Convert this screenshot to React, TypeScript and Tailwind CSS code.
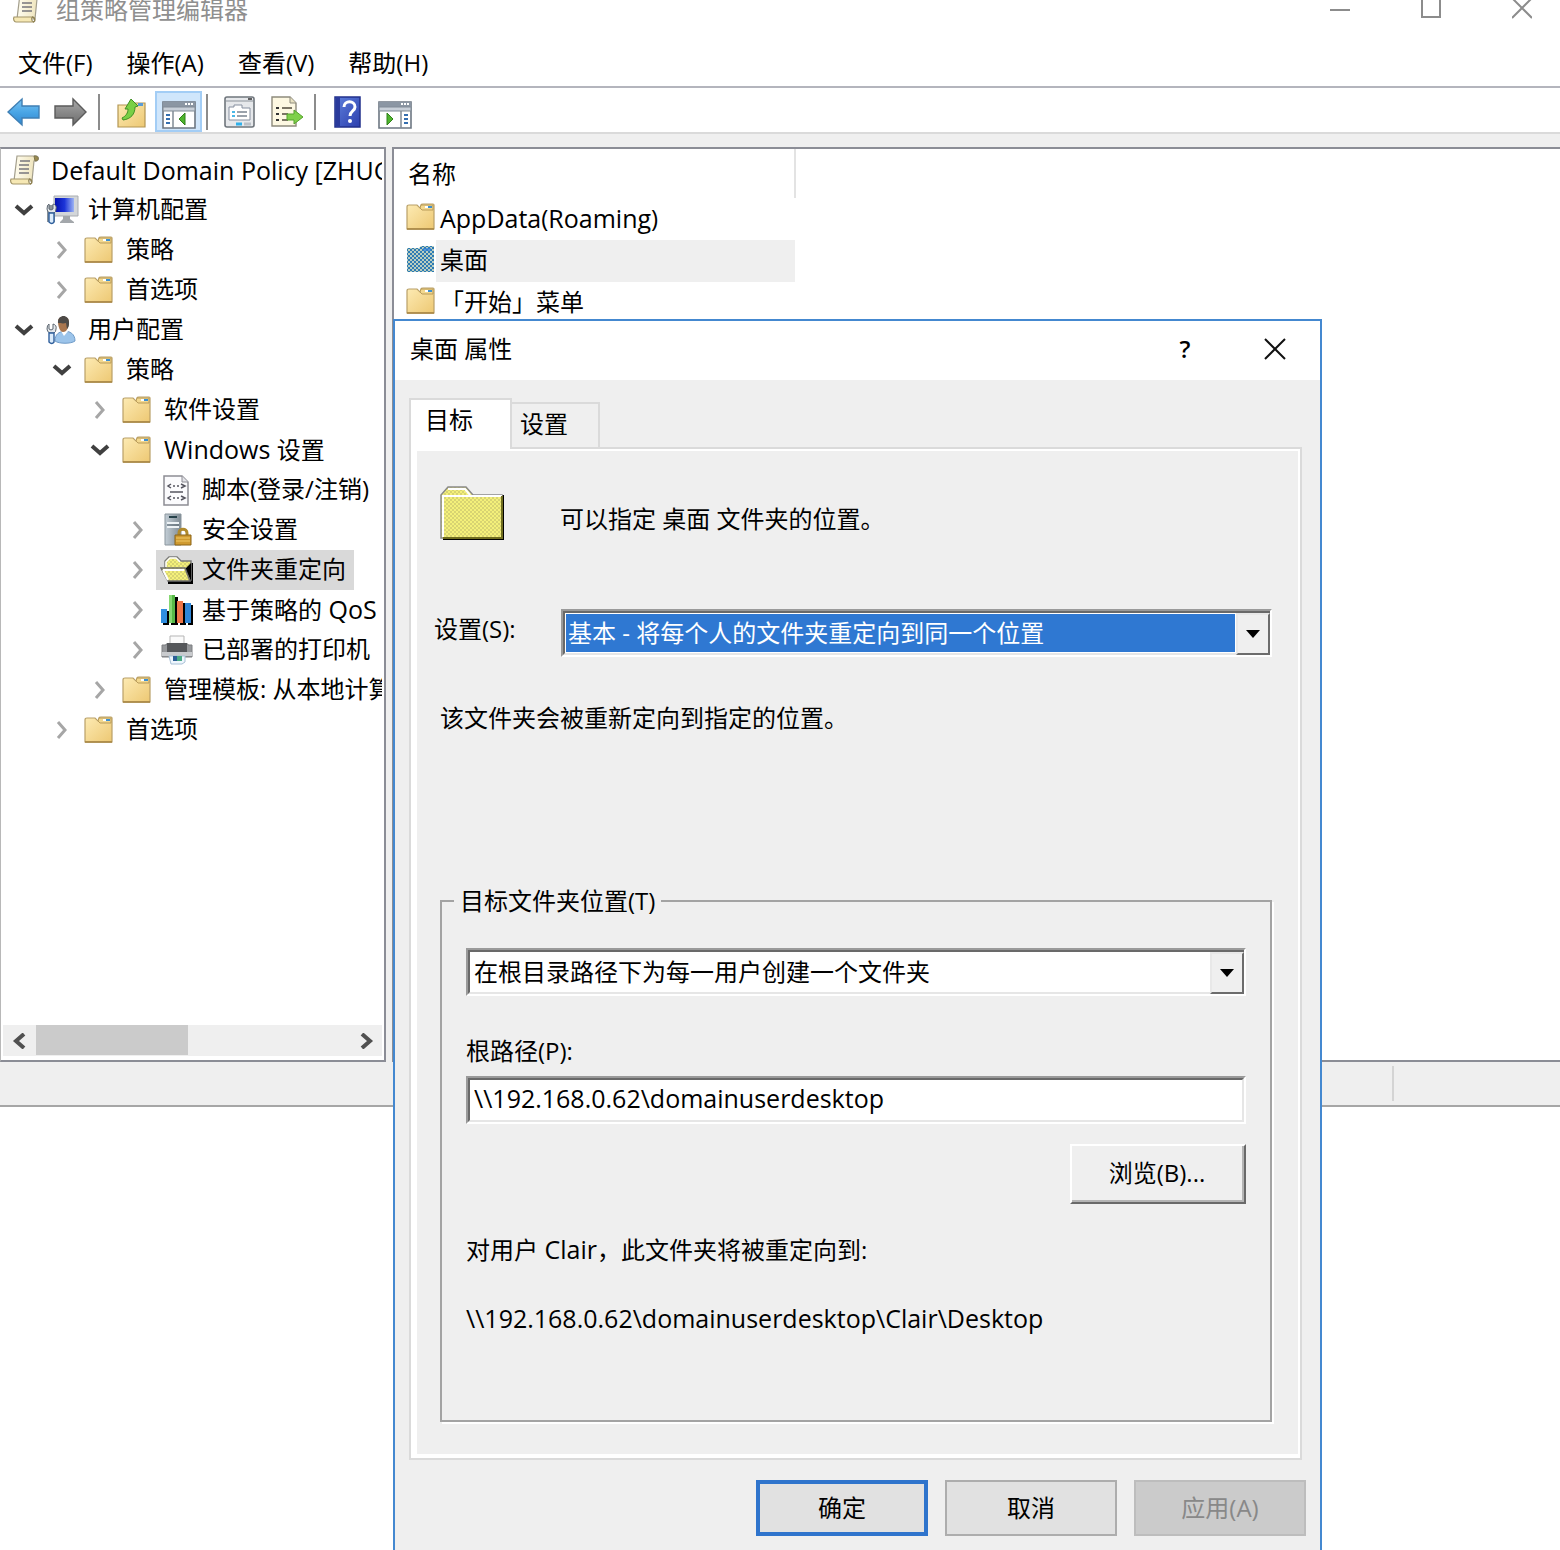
import { useState, type ReactNode } from "react";

/* ---------- shared paint ---------- */

function Paints() {
  return (
    <svg className="absolute size-0" aria-hidden="true">
      <defs>
        <linearGradient id="folder" x1="0" y1="0" x2="1" y2="1">
          <stop offset="0" stopColor="#fdebb4" />
          <stop offset="1" stopColor="#edc873" />
        </linearGradient>
        <linearGradient id="blueArrow" x1="0" y1="0" x2="0" y2="1">
          <stop offset="0" stopColor="#7cc4f2" />
          <stop offset="0.5" stopColor="#4aa6e6" />
          <stop offset="1" stopColor="#2f86cf" />
        </linearGradient>
        <linearGradient id="grayArrow" x1="0" y1="0" x2="0" y2="1">
          <stop offset="0" stopColor="#a9a9a9" />
          <stop offset="1" stopColor="#6b6b6b" />
        </linearGradient>
        <linearGradient id="help" x1="0" y1="0" x2="1" y2="1">
          <stop offset="0" stopColor="#5f80dc" />
          <stop offset="1" stopColor="#2c3fae" />
        </linearGradient>
        <linearGradient id="screen" x1="0" y1="0" x2="1" y2="0">
          <stop offset="0" stopColor="#0410b0" />
          <stop offset="0.5" stopColor="#1c34d8" />
          <stop offset="1" stopColor="#9db4f4" />
        </linearGradient>
        <linearGradient id="server" x1="0" y1="0" x2="1" y2="0">
          <stop offset="0" stopColor="#c3ced6" />
          <stop offset="1" stopColor="#7f8b94" />
        </linearGradient>
        <linearGradient id="paper" x1="0" y1="0" x2="1" y2="0">
          <stop offset="0" stopColor="#fffdf0" />
          <stop offset="1" stopColor="#ece0b4" />
        </linearGradient>
        <pattern id="blueDither" width="4" height="4" patternUnits="userSpaceOnUse">
          <rect width="4" height="4" fill="#b9cdbf" />
          <rect width="2" height="2" fill="#2d7bb4" />
          <rect x="2" y="2" width="2" height="2" fill="#2d7bb4" />
        </pattern>
        <pattern id="yellowDither" width="4" height="4" patternUnits="userSpaceOnUse">
          <rect width="4" height="4" fill="#f4f07a" />
          <rect width="2" height="2" fill="#d8d472" />
          <rect x="2" y="2" width="2" height="2" fill="#d8d472" />
        </pattern>
      </defs>
    </svg>
  );
}

/* ---------- icons ---------- */

function ScrollIcon() {
  return (
    <svg width="32" height="32" viewBox="0 0 32 32" aria-hidden="true">
      <path d="M8 2h19c3 0 3 5 0 5h-2l-2 20H5z" fill="url(#paper)" stroke="#a39e8c" strokeWidth="1.2" />
      <path d="M25 2c5-1 6 5 1 5z" fill="#9a8a4e" stroke="#7d7550" />
      <path d="M2 25h18c-1 2 0 5 2 5H4c-2 0-3-3-2-5z" fill="#f6e8b4" stroke="#a3966a" strokeWidth="1.2" />
      <path d="M20 25c3 0 4 5 1 5" fill="none" stroke="#8f8253" strokeWidth="1.5" />
      <path d="M11 7h10M10 11h10M10 15h10M10 19h10" stroke="#77757c" strokeWidth="1.5" />
    </svg>
  );
}

function FolderIcon({ dithered = false }: { dithered?: boolean }) {
  if (dithered) {
    return (
      <svg width="30" height="28" viewBox="0 0 30 28" aria-hidden="true">
        <path d="M1 3h12l2-2h13v26H1z" fill="url(#blueDither)" />
        <path d="M17 3h8v3h-8z" fill="#2f80dc" opacity="0.7" />
      </svg>
    );
  }
  return (
    <svg width="30" height="28" viewBox="0 0 30 28" aria-hidden="true">
      <path d="M1 4q0-2 2-2h8l3 3h1V2q0-1 2-1h10q1 0 1 1v24H1z" fill="url(#folder)" stroke="#b9a068" strokeWidth="1.2" />
      <path d="M15 2h12v5H16l-2-2z" fill="#f3d88e" stroke="#b99b58" />
      <path d="M19 3h4v2h-4z" fill="#fff" />
      <path d="M22 3h4v2h-4z" fill="#3c8fd0" />
      <path d="M1 26h27" stroke="#a78542" strokeWidth="1.6" />
    </svg>
  );
}

function TreeFolder() {
  return (
    <span className="mr-1">
      <FolderIcon />
    </span>
  );
}

function Wrench() {
  return (
    <g>
      <path d="M3 9v5l2 1 2-1V9q4 1 3 5 0 3-2 4H4q-3-1-3-4 0-4 2-5z" fill="#e4e8ec" stroke="#5d6670" />
      <path d="M3 18h5v9q-2 3-5 0z" fill="#dcecfb" stroke="#2f5f9c" strokeWidth="1.4" />
    </g>
  );
}

function ComputerIcon() {
  return (
    <svg width="34" height="30" viewBox="0 0 34 30" aria-hidden="true">
      <path d="M8 1h24v20H8z" fill="#d3d6d9" stroke="#a9adb1" />
      <path d="M9 3h19v14H9z" fill="url(#screen)" />
      <path d="M17 21h7v3l4 3v1H14v-1l3-3z" fill="#a3a7ab" />
      <path d="M1 10h8v17H1z" fill="#8a9299" />
      <Wrench />
    </svg>
  );
}

function UserIcon() {
  return (
    <svg width="34" height="30" viewBox="0 0 34 30" aria-hidden="true">
      <path d="M9 26c0-7 4-9 9-10 6 0 11 3 11 10-4 3-16 3-20 0z" fill="#9cc4ea" stroke="#6f9bc8" />
      <path d="M15 16l3 5 5-6" fill="#fff" />
      <path d="M12 6c0-5 10-6 11 0 0 6-2 11-6 11-3 0-5-5-5-11z" fill="#a9764e" />
      <path d="M12 8c-1-9 12-10 11 1 0 2-1 4-2 5l-1-6c-3 1-6 0-8 0z" fill="#4d4a47" />
      <Wrench />
    </svg>
  );
}

function ScriptIcon() {
  return (
    <svg width="32" height="32" viewBox="0 0 32 32" aria-hidden="true">
      <path d="M3 2h18l6 6v23H3z" fill="#fbfbfd" stroke="#8d8d94" strokeWidth="1.5" />
      <path d="M21 2v6h6" fill="#e3e3e8" stroke="#8d8d94" />
      <path d="M10 10l-3 2 3 2M20 10l4 2-4 2M12 12h2M16 12h2M9 18h13M10 22l-3 2 3 2M20 22l4 2-4 2M12 24h2M16 24h2" fill="none" stroke="#55555f" strokeWidth="1.5" />
    </svg>
  );
}

function SecurityIcon() {
  return (
    <svg width="32" height="34" viewBox="0 0 32 34" aria-hidden="true">
      <path d="M4 1h16v31H4z" fill="url(#server)" stroke="#8b969e" />
      <path d="M8 3h8v2H8z" fill="#27424a" />
      <path d="M6 10h12M6 14h12" stroke="#eef3f6" strokeWidth="2" />
      <path d="M6 12h12" stroke="#55636c" />
      <path d="M18 23v-3c0-5 8-5 8 0v3" fill="none" stroke="#b08a2c" strokeWidth="3" />
      <path d="M14 22h16v10H14z" fill="#cf9a30" stroke="#8c6416" />
      <path d="M15 25h14M15 28h14" stroke="#f0c864" />
    </svg>
  );
}

function OpenFolderIcon() {
  return (
    <svg width="34" height="30" viewBox="0 0 34 30" aria-hidden="true">
      <path d="M8 26h22V8h3v21H8z" fill="#000" />
      <path d="M5 14V6l4-4h8l4 4h10v19H9z" fill="url(#yellowDither)" stroke="#7b7b7b" strokeWidth="1.5" />
      <path d="M6 12V7l4-4h6l4 4" fill="none" stroke="#fff" strokeWidth="1.5" />
      <path d="M25 14l6 12V8z" fill="#000" />
      <path d="M1 13h24l5 13H8z" fill="url(#yellowDither)" stroke="#6c6c6c" strokeWidth="1.5" />
      <path d="M3 15h21M3 15l5 10" fill="none" stroke="#fff" strokeWidth="2" />
    </svg>
  );
}

function BarsIcon() {
  return (
    <svg width="34" height="32" viewBox="0 0 34 32" aria-hidden="true">
      <path d="M3 17h6v14H3zM11 3h7v28h-7zM20 9h6v22h-6zM28 11h5v20h-5z" fill="#000" />
      <path d="M1 15h6v14H1z" fill="#2f8ee0" />
      <path d="M9 1h6v28H9z" fill="#57b947" />
      <path d="M9 1h3v28H9z" fill="#86d873" />
      <path d="M17 7h6v22h-6z" fill="#ee7548" />
      <path d="M25 9h6v20h-6z" fill="#2f86d8" />
    </svg>
  );
}

function PrinterIcon() {
  return (
    <svg width="34" height="32" viewBox="0 0 34 32" aria-hidden="true">
      <path d="M10 2h14v9H10z" fill="#fafafa" stroke="#b5b5b5" />
      <path d="M2 11h4v-1h22v1h4v12H2z" fill="#96989b" stroke="#7c7e81" />
      <path d="M7 9h20v9H7z" fill="#55575a" />
      <path d="M2 18h30v4H2z" fill="#c9cbce" />
      <path d="M9 22h16v6l-3 2H11z" fill="#eef6fd" stroke="#a9c1d6" />
      <path d="M13 22h4v5h-4z" fill="#2d5f96" />
      <path d="M17 22h5v5h-5z" fill="#4cab86" />
    </svg>
  );
}

function BigFolderIcon() {
  return (
    <svg width="66" height="56" viewBox="0 0 66 56" aria-hidden="true">
      <path d="M3 52h59V10h2v45H3z" fill="#000" />
      <path d="M1 53V10l7-8h18l7 8h29v43z" fill="url(#yellowDither)" stroke="#8a8a8a" strokeWidth="1.5" />
      <path d="M3 52V11h59" fill="none" stroke="#fff" strokeWidth="2" />
      <path d="M8 4h17l5 6" fill="none" stroke="#fff" strokeWidth="2" />
      <path d="M62 11v42H3" fill="none" stroke="#6f6d1e" strokeWidth="2" />
    </svg>
  );
}

function ArrowIcon({ forward = false }: { forward?: boolean }) {
  return (
    <svg width="34" height="30" viewBox="0 0 34 30" aria-hidden="true">
      {forward ? (
        <path d="M32 15L19 2v7H1v12h18v7z" fill="url(#grayArrow)" stroke="#5b5b5b" strokeWidth="1.4" />
      ) : (
        <path d="M1 15L15 2v7h17v12H15v7z" fill="url(#blueArrow)" stroke="#3f7fb4" strokeWidth="1.4" />
      )}
    </svg>
  );
}

function UpFolderIcon() {
  return (
    <svg width="30" height="32" viewBox="0 0 30 32" aria-hidden="true">
      <path d="M1 9h9l3 3h2l2-5h11v24H1z" fill="url(#folder)" stroke="#b39653" strokeWidth="1.2" />
      <path d="M21 7h5v3h-5z" fill="#5a9bd6" />
      <path d="M5 22c4-2 6-5 6-9H8l6-10 7 7-3 1c0 7-4 12-12 13z" fill="#79cf45" stroke="#3f8f24" />
    </svg>
  );
}

function PaneIcon({ mirrored = false }: { mirrored?: boolean }) {
  return (
    <svg width="34" height="28" viewBox="0 0 34 28" aria-hidden="true">
      <path d="M1 1h32v26H1z" fill="#fff" stroke="#6d7782" strokeWidth="1.6" />
      <path d="M1 1h32v5H1z" fill="#8b96a3" />
      <path d="M23 3h2M26 3h2M29 3h2" stroke="#fff" strokeWidth="2" />
      <path d="M1 6h32v4H1z" fill="#c8cfd8" stroke="#808b96" />
      {mirrored ? (
        <>
          <path d="M23 10v17" stroke="#808b96" strokeWidth="1.5" />
          <path d="M26 14h4M26 18h4M26 22h4" stroke="#356fb0" strokeWidth="2" />
          <path d="M9 12l6 6-6 6z" fill="#4fb52e" stroke="#2f8018" />
        </>
      ) : (
        <>
          <path d="M11 10v17" stroke="#808b96" strokeWidth="1.5" />
          <path d="M4 14h4M4 18h4M4 22h4" stroke="#356fb0" strokeWidth="2" />
          <path d="M23 12l-6 6 6 6z" fill="#4fb52e" stroke="#2f8018" />
        </>
      )}
    </svg>
  );
}

function PropertiesIcon() {
  return (
    <svg width="32" height="32" viewBox="0 0 32 32" aria-hidden="true">
      <rect x="1" y="1" width="29" height="30" rx="2" fill="#e6e8eb" stroke="#6f757c" strokeWidth="1.6" />
      <path d="M2 5h27" stroke="#8b929a" />
      <path d="M24 3h4" stroke="#333" strokeWidth="1.5" />
      <path d="M5 11h5V9h8v3h8v12H5z" fill="#fff" stroke="#8790a0" />
      <path d="M8 16h3M8 20h3" stroke="#49b7e6" strokeWidth="2" />
      <path d="M13 16h10M13 20h10" stroke="#9aa2ab" strokeWidth="2" />
      <path d="M12 28h6" stroke="#2fb0ea" strokeWidth="3" />
      <path d="M20 28h7" stroke="#b9bfc6" strokeWidth="3" />
    </svg>
  );
}

function ExportIcon() {
  return (
    <svg width="34" height="34" viewBox="0 0 34 34" aria-hidden="true">
      <path d="M2 2h18l6 6v23H2z" fill="#fdf8e2" stroke="#8d8a7c" strokeWidth="1.4" />
      <path d="M20 2v6h6" fill="#e9e2c3" stroke="#8d8a7c" />
      <path d="M6 13h3M6 19h3M6 25h3" stroke="#333" strokeWidth="2" />
      <path d="M12 13h10M12 19h6M12 25h6" stroke="#7b7565" strokeWidth="2" />
      <path d="M17 19h7v-4l9 7-9 7v-4h-7z" fill="#7fd04a" stroke="#55a32c" />
    </svg>
  );
}

function HelpIcon() {
  return (
    <svg width="28" height="32" viewBox="0 0 28 32" aria-hidden="true">
      <path d="M1 1h25v30H1z" fill="url(#help)" stroke="#22308c" strokeWidth="1.5" />
      <path d="M2 1h4v30H2z" fill="#2a3a9c" />
      <path d="M10 11c0-7 11-7 11 0 0 4-5 4-5 9" fill="none" stroke="#fff" strokeWidth="3" />
      <circle cx="16" cy="25" r="2" fill="#fff" />
    </svg>
  );
}

function Chevron({ dir }: { dir: "down" | "right" }) {
  return dir === "down" ? (
    <svg width="20" height="14" viewBox="0 0 20 14" aria-hidden="true">
      <path d="M2 3l8 7 8-7" fill="none" stroke="#404040" strokeWidth="4" />
    </svg>
  ) : (
    <svg width="14" height="20" viewBox="0 0 14 20" aria-hidden="true">
      <path d="M3 2l7 8-7 8" fill="none" stroke="#a6a6a6" strokeWidth="3" />
    </svg>
  );
}

/* Latin words are set one step larger than the Chinese text beside them. */
function Label({ text }: { text: string }) {
  return (
    <>
      {text.split(/([A-Za-z]{2,} ?| [A-Z][A-Za-z]+)/).map((part, i) =>
        i % 2 ? (
          <span key={i} className="text-[25px] whitespace-pre">
            {part}
          </span>
        ) : (
          part
        ),
      )}
    </>
  );
}

/* ---------- tree ---------- */

type Row = {
  label: string;
  depth: 1 | 2 | 3 | 4;
  icon: ReactNode;
  state?: "open" | "closed";
  selected?: boolean;
};

const rows: Row[] = [
  { label: "计算机配置", depth: 1, icon: <ComputerIcon />, state: "open" },
  { label: "策略", depth: 2, icon: <TreeFolder />, state: "closed" },
  { label: "首选项", depth: 2, icon: <TreeFolder />, state: "closed" },
  { label: "用户配置", depth: 1, icon: <UserIcon />, state: "open" },
  { label: "策略", depth: 2, icon: <TreeFolder />, state: "open" },
  { label: "软件设置", depth: 3, icon: <TreeFolder />, state: "closed" },
  { label: "Windows 设置", depth: 3, icon: <TreeFolder />, state: "open" },
  { label: "脚本(登录/注销)", depth: 4, icon: <ScriptIcon /> },
  { label: "安全设置", depth: 4, icon: <SecurityIcon />, state: "closed" },
  { label: "文件夹重定向", depth: 4, icon: <OpenFolderIcon />, state: "closed", selected: true },
  { label: "基于策略的 QoS", depth: 4, icon: <BarsIcon />, state: "closed" },
  { label: "已部署的打印机", depth: 4, icon: <PrinterIcon />, state: "closed" },
  { label: "管理模板: 从本地计算", depth: 3, icon: <TreeFolder />, state: "closed" },
  { label: "首选项", depth: 2, icon: <TreeFolder />, state: "closed" },
];

const indent = { 1: "pl-1", 2: "pl-[42px]", 3: "pl-20", 4: "pl-[118px]" };

function Tree() {
  return (
    <ul role="tree" className="mr-0.5 flex-1 overflow-hidden pt-px">
      <li role="treeitem" className="flex h-10 items-center gap-2.5 pl-2">
        <span className="w-8 shrink-0">
          <ScrollIcon />
        </span>
        <span className="text-[25px] whitespace-nowrap">Default Domain Policy [ZHUG</span>
      </li>
      {rows.map((row, i) => (
        <li key={i} role="treeitem" aria-selected={!!row.selected} className={`flex h-10 items-center ${indent[row.depth]}`}>
          <span className="flex w-[37px] shrink-0 justify-center">
            {row.state && (
              <button aria-label={row.state === "open" ? "折叠" : "展开"}>
                <Chevron dir={row.state === "open" ? "down" : "right"} />
              </button>
            )}
          </span>
          <span className={`flex h-10 items-center pr-2 ${row.selected ? "bg-[#d9d9d9]" : ""}`}>
            <span className="flex w-[46px] shrink-0 justify-center pr-1">{row.icon}</span>
            <span className="pb-0.5 whitespace-nowrap">
              <Label text={row.label} />
            </span>
          </span>
        </li>
      ))}
    </ul>
  );
}

function HScrollbar() {
  return (
    <div className="mx-0.5 mb-1 flex h-[31px] items-center bg-[#efefef]">
      <button aria-label="向左滚动" className="flex w-[33px] justify-center">
        <svg width="16" height="16" viewBox="0 0 16 16" aria-hidden="true">
          <path d="M12 1L4 8l8 7" fill="none" stroke="#505050" strokeWidth="4" />
        </svg>
      </button>
      <div className="h-full flex-1">
        <div className="h-[30px] w-[152px] bg-[#cbcbcb]" />
      </div>
      <button aria-label="向右滚动" className="flex w-8 justify-center">
        <svg width="16" height="16" viewBox="0 0 16 16" aria-hidden="true">
          <path d="M4 1l8 7-8 7" fill="none" stroke="#505050" strokeWidth="4" />
        </svg>
      </button>
    </div>
  );
}

/* ---------- toolbar ---------- */

function ToolButton({ label, active, children }: { label: string; active?: boolean; children: ReactNode }) {
  return (
    <button
      aria-label={label}
      className={`flex h-[41px] w-[47px] items-center justify-center ${active ? "border-2 border-[#a3cdf5] bg-[#d0e6fb]" : ""}`}
    >
      {active ? <span className="pt-1.5">{children}</span> : children}
    </button>
  );
}

function ToolSeparator() {
  return <div className="mr-2 ml-1 h-9 w-0.5 bg-[#8c8c8c]" />;
}

function Toolbar() {
  return (
    <div className="flex items-center border-b-2 border-[#dadada] pt-[3px]">
      <ToolButton label="后退"><ArrowIcon /></ToolButton>
      <ToolButton label="前进"><ArrowIcon forward /></ToolButton>
      <ToolSeparator />
      <ToolButton label="上移一级"><UpFolderIcon /></ToolButton>
      <ToolButton label="显示/隐藏控制台树" active><PaneIcon /></ToolButton>
      <ToolSeparator />
      <ToolButton label="属性"><PropertiesIcon /></ToolButton>
      <ToolButton label="导出列表"><ExportIcon /></ToolButton>
      <ToolSeparator />
      <ToolButton label="帮助"><HelpIcon /></ToolButton>
      <ToolButton label="显示/隐藏操作窗格">
        <span className="pt-1.5"><PaneIcon mirrored /></span>
      </ToolButton>
    </div>
  );
}

/* ---------- dialog ---------- */

function ComboBox({ id, label, options, highlighted }: { id: string; label?: string; options: string[]; highlighted?: boolean }) {
  return (
    <div className="flex-1 border-2 border-t-[#9a9a9a] border-r-white border-b-white border-l-[#9a9a9a]">
      <div className="relative flex h-11 border-t-2 border-b-2 border-l-2 border-t-[#696969] border-b-[#e6e6e6] border-l-[#696969] bg-white">
        <select
          id={id}
          aria-label={label}
          className={`w-full appearance-none outline-none ${highlighted ? "m-px mr-[35px] bg-[#2f78d2] pl-0.5 text-white" : "mr-[34px] pl-1"}`}
        >
          {options.map((o) => (
            <option key={o}>{o}</option>
          ))}
        </select>
        <span className="pointer-events-none absolute inset-y-0 right-0 -mb-0.5 flex w-[34px] items-center justify-center border-2 border-t-[#e8e8e8] border-r-[#6c6c6c] border-b-[#6c6c6c] border-l-[#e8e8e8] bg-[#efefef]">
          <svg width="14" height="8" viewBox="0 0 14 8" aria-hidden="true">
            <path d="M0 0h14L7 8z" fill="#000" />
          </svg>
        </span>
      </div>
    </div>
  );
}

function PropertiesDialog() {
  const [path, setPath] = useState("\\\\192.168.0.62\\domainuserdesktop");
  return (
    <section
      role="dialog"
      aria-label="桌面 属性"
      className="absolute top-[319px] left-[393px] flex w-[929px] flex-col border-2 border-b-0 border-[#4488d0] bg-[#efefef] pb-5"
    >
      <header className="flex h-[59px] items-center bg-white pb-1 pl-[15px]">
        <h2 className="flex-1">桌面 属性</h2>
        <button aria-label="帮助" className="flex h-full w-[90px] items-center justify-center font-semibold">?</button>
        <button aria-label="关闭" className="flex h-full w-[90px] items-center justify-center">
          <svg width="22" height="22" viewBox="0 0 22 22" aria-hidden="true">
            <path d="M1 1l20 20M21 1L1 21" stroke="#111" strokeWidth="2" />
          </svg>
        </button>
      </header>

      <div role="tablist" className="flex items-end px-3.5 pt-[18px]">
        <button role="tab" aria-selected="true" className="z-10 -mb-0.5 flex h-[51px] w-[103px] border-2 border-b-0 border-[#dadada] bg-white pt-1 pl-3.5">
          目标
        </button>
        <button role="tab" aria-selected="false" className="flex h-[45px] w-[88px] border-2 border-b-0 border-l-0 border-[#dadada] pt-1 pl-2">
          设置
        </button>
      </div>

      <div className="mr-[18px] ml-3.5 border-2 border-[#dadada]">
        <div className="border-t-2 border-r-2 border-b-4 border-l-6 border-white pt-[34px] pr-[26px] pb-8 pl-[23px]">
          <div className="flex items-center">
            <span className="w-[120px] shrink-0">
              <BigFolderIcon />
            </span>
            <p className="pt-3">可以指定 桌面 文件夹的位置。</p>
          </div>

          <div className="mt-[68px] -ml-1.5 flex">
            <label htmlFor="mode" className="w-[127px] shrink-0 pt-1">设置(S):</label>
            <ComboBox id="mode" highlighted options={["基本 - 将每个人的文件夹重定向到同一个位置", "高级 - 为不同的用户组指定位置", "未配置"]} />
          </div>

          <p className="mt-[45px]">该文件夹会被重新定向到指定的位置。</p>

          <fieldset className="mt-[151px] border-2 border-[#a3a3a3] px-6 pb-[86px] shadow-[2px_2px_0_#fff]">
            <legend className="-ml-3 px-1.5">目标文件夹位置(T)</legend>
            <div className="mt-[31px] flex">
              <ComboBox id="target" label="目标文件夹位置" options={["在根目录路径下为每一用户创建一个文件夹", "重定向到下列位置", "重定向到本地用户配置文件位置"]} />
            </div>
            <label htmlFor="root" className="mt-[39px] block">根路径(P):</label>
            <div className="mt-[9px] border-2 border-t-[#9a9a9a] border-r-white border-b-white border-l-[#9a9a9a]">
              <input
                id="root"
                value={path}
                onChange={(e) => setPath(e.target.value)}
                className="block h-11 w-full border-2 border-t-[#696969] border-r-[#e6e6e6] border-b-[#e6e6e6] border-l-[#696969] bg-white pb-1 pl-1 text-[25px] outline-none"
              />
            </div>
            <div className="mt-5 flex justify-end">
              <button className="border-2 border-t-white border-r-[#696969] border-b-[#696969] border-l-white">
                <span className="flex h-14 w-[172px] items-center justify-center border-r-2 border-b-2 border-[#b4b4b4]">浏览(B)...</span>
              </button>
            </div>
            <p className="mt-[29px]">
              <Label text="对用户 Clair，此文件夹将被重定向到:" />
            </p>
            <p className="mt-9 text-[25px]">\\192.168.0.62\domainuserdesktop\Clair\Desktop</p>
          </fieldset>
        </div>
      </div>

      <footer className="mt-5 flex justify-end gap-[17px] pr-3.5">
        <button className="h-14 w-[172px] border-4 border-[#2f74cc] bg-[#e1e1e1]">确定</button>
        <button className="h-14 w-[172px] border-2 border-[#adadad] bg-[#e1e1e1]">取消</button>
        <button disabled className="h-14 w-[172px] border-2 border-[#bdbdbd] bg-[#cbcbcb] text-[#888888]">应用(A)</button>
      </footer>
    </section>
  );
}

/* ---------- window ---------- */

const menus = ["文件(F)", "操作(A)", "查看(V)", "帮助(H)"];

const items = [
  { name: "AppData(Roaming)", selected: false },
  { name: "桌面", selected: true },
  { name: "「开始」菜单", selected: false },
];

export default function App() {
  return (
    <div className='relative min-h-screen overflow-hidden bg-white font-["Open_Sans","Noto_Sans_CJK_SC",sans-serif] text-[24px] leading-8 text-black'>
      <Paints />

      <header className="flex h-10 items-start">
        <span className="-mt-2 ml-3 w-11 shrink-0">
          <ScrollIcon />
        </span>
        <h1 className="flex-1 leading-5 text-[#8f8f8f]">组策略管理编辑器</h1>
        <div className="flex gap-[15px]">
          <button aria-label="最小化" className="flex h-5 w-[76px] items-center justify-center">
            <svg width="20" height="20" viewBox="0 0 20 20" aria-hidden="true"><path d="M0 10h20" stroke="#8c8c8c" strokeWidth="2" /></svg>
          </button>
          <button aria-label="最大化" className="flex h-5 w-[76px] items-center justify-center">
            <svg width="20" height="20" viewBox="0 0 20 20" aria-hidden="true"><path d="M1-1h18v18H1z" fill="none" stroke="#8c8c8c" strokeWidth="2" /></svg>
          </button>
          <button aria-label="关闭" className="flex h-5 w-[76px] items-center justify-center">
            <svg width="20" height="20" viewBox="0 0 20 20" aria-hidden="true"><path d="M0-2l20 20M20-2L0 18" stroke="#8c8c8c" strokeWidth="2" /></svg>
          </button>
        </div>
      </header>

      <nav className="flex h-12 items-center gap-[34px] border-b-2 border-[#b4b5bd] pl-[18px]">
        {menus.map((m) => (
          <button key={m} className="whitespace-nowrap">{m}</button>
        ))}
      </nav>

      <Toolbar />

      <main className="flex min-h-[928px] gap-1.5 bg-[#efefef] pt-[13px]">
        <aside className="flex w-[386px] shrink-0 flex-col border-2 border-l border-[#8b8d96] border-l-[#b8b8b8] bg-white">
          <Tree />
          <HScrollbar />
        </aside>
        <div className="flex-1 border-2 border-r-0 border-[#8b8d96] bg-white">
          <table className="w-[402px] border-collapse">
            <thead>
              <tr>
                <th className="h-[49px] border-r-2 border-[#e3e3e3] pl-3.5 text-left font-normal">名称</th>
              </tr>
            </thead>
            <tbody>
              {items.map((it) => (
                <tr key={it.name}>
                  <td className="p-0">
                    <div className="flex h-[42px] items-center pl-3">
                      <span className="w-[30px] shrink-0 pb-1">
                        <FolderIcon dithered={it.selected} />
                      </span>
                      <span className={`flex h-full flex-1 items-center pb-0.5 pl-1 whitespace-nowrap ${it.selected ? "bg-[#efefef]" : ""}`}>
                        <Label text={it.name} />
                      </span>
                    </div>
                  </td>
                </tr>
              ))}
            </tbody>
          </table>
        </div>
      </main>

      <footer className="flex h-[45px] border-b-2 border-[#a6a6a6] bg-[#efefef] py-1">
        <div className="flex-1" />
        <div className="w-[168px] border-l-2 border-[#d4d4d4]" />
      </footer>

      <PropertiesDialog />
    </div>
  );
}
